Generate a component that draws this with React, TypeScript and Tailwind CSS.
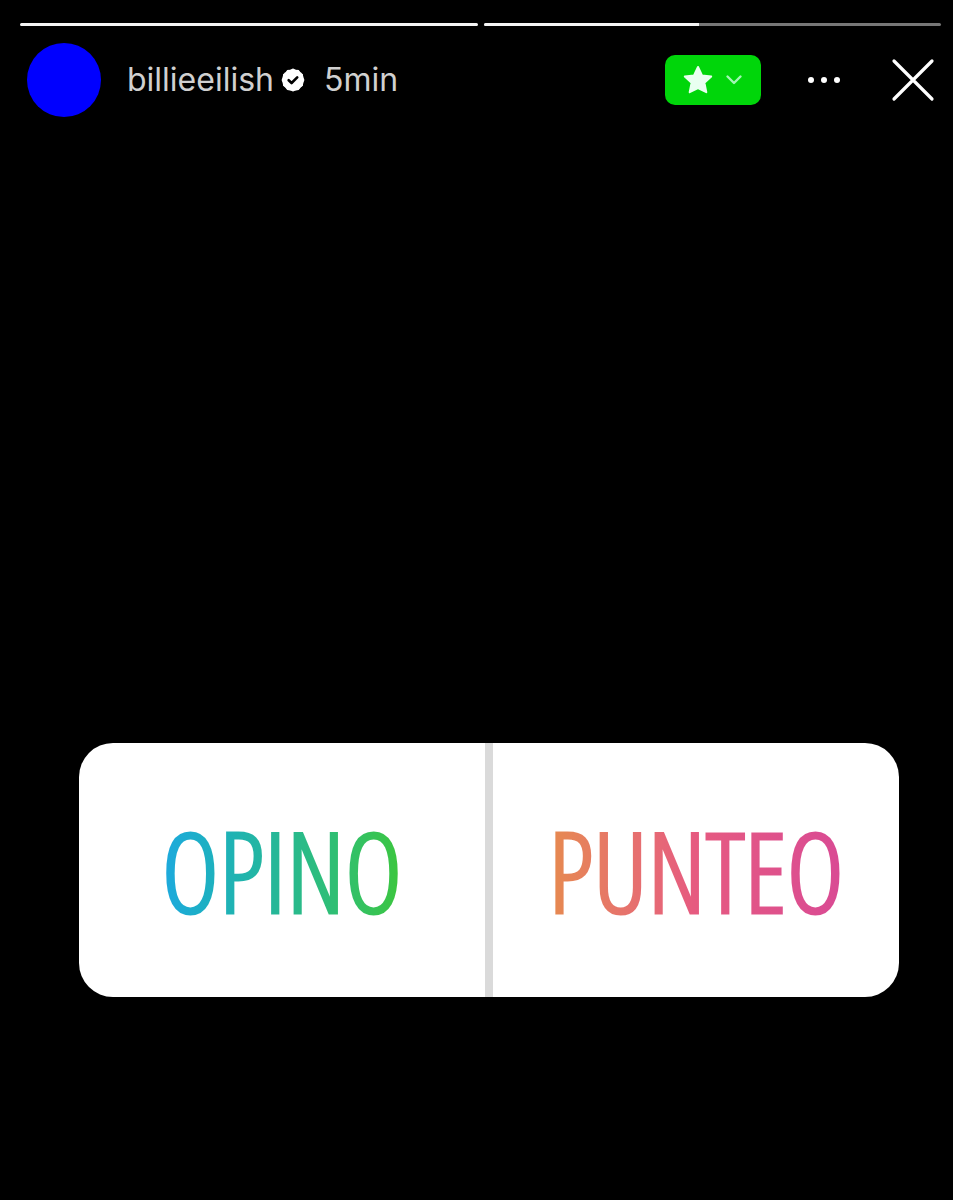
import React, { useState } from "react";

const segments = [
  { id: 1, progress: 100 },
  { id: 2, progress: 47 },
];

const options = [
  { label: "OPINO", color: "from-[#1ea9de] via-[#27b893] to-[#3cc63a]" },
  { label: "PUNTEO", color: "from-[#e68a4e] via-[#e65a80] to-[#d94a94]" },
];

function VerifiedBadge() {
  return (
    <svg viewBox="0 0 24 24" className="w-[26px] h-[26px]" role="img" aria-label="Verified">
      <g fill="#fff">
        <circle cx="12" cy="12" r="10" />
        <rect x="4" y="4" width="16" height="16" rx="2" transform="rotate(15 12 12)" />
        <rect x="4" y="4" width="16" height="16" rx="2" transform="rotate(45 12 12)" />
        <rect x="4" y="4" width="16" height="16" rx="2" transform="rotate(75 12 12)" />
      </g>
      <path
        d="M8 12.2l2.7 2.6 5.2-5.2"
        fill="none"
        stroke="#000"
        strokeWidth="2.4"
        strokeLinecap="round"
        strokeLinejoin="round"
      />
    </svg>
  );
}

export default function App() {
  const [selected, setSelected] = useState<string>();

  return (
    <main className="min-h-screen bg-black flex flex-col font-['Inter',sans-serif]">
      <header className="pt-[23px]">
        <div className="flex gap-1.5 pl-5 pr-3">
          {segments.map((s) => (
            <div key={s.id} className="flex-1 h-[3px] rounded-full bg-[#767676] overflow-hidden">
              <div className="h-full bg-[#f4f4f4]" style={{ width: `${s.progress}%` }} />
            </div>
          ))}
        </div>

        <div className="flex items-center justify-between mt-[17px] pl-[27px] pr-[18px]">
          <div className="flex items-center">
            <div className="w-[74px] h-[74px] rounded-full bg-[#0000ff]" />
            <a href="#profile" className="ml-[26px] flex items-center gap-1.5 text-[32px] leading-10 text-[#d0d0d0]">
              billieeilish
              <VerifiedBadge />
            </a>
            <span className="ml-[18px] text-[32px] leading-10 text-[#d0d0d0]">5min</span>
          </div>

          <div className="flex items-center">
            <button
              aria-label="Close friends"
              className="w-24 h-[50px] rounded-[10px] bg-[#00d60a] flex items-center justify-center gap-3"
            >
              <svg viewBox="0 0 30 30" className="w-[30px] h-[30px]">
                <path
                  d="M15 2l4 8.4 9.2 1.1-6.8 6.3 1.9 9.4L15 23l-8.3 4.2 1.9-9.4-6.8-6.3 9.2-1.1z"
                  fill="#e9fff0"
                  stroke="#e9fff0"
                  strokeWidth="2"
                  strokeLinejoin="round"
                />
              </svg>
              <svg viewBox="0 0 18 12" className="w-[18px] h-3">
                <path
                  d="M2.5 2.5L9 9l6.5-6.5"
                  fill="none"
                  stroke="#a2f7b4"
                  strokeWidth="2.4"
                  strokeLinecap="round"
                  strokeLinejoin="round"
                />
              </svg>
            </button>
            <button aria-label="More" className="ml-[46px]">
              <svg viewBox="0 0 34 8" className="w-[34px] h-2" fill="#fff">
                <circle cx="4" cy="4" r="3" />
                <circle cx="17" cy="4" r="3" />
                <circle cx="30" cy="4" r="3" />
              </svg>
            </button>
            <button aria-label="Close" className="ml-[50px]">
              <svg viewBox="0 0 44 44" className="w-11 h-11">
                <path d="M3 3l38 38M41 3l-38 38" stroke="#fff" strokeWidth="3.2" strokeLinecap="round" />
              </svg>
            </button>
          </div>
        </div>
      </header>

      <section className="mt-auto pt-10 pb-[203px] pl-[79px] pr-[54px]">
        <div className="flex h-[254px] rounded-[34px] bg-white overflow-hidden divide-x-8 divide-[#dadada]">
          {options.map((o) => (
            <button
              key={o.label}
              aria-pressed={selected === o.label}
              onClick={() => setSelected(o.label)}
              className="flex-1 flex items-center justify-center"
            >
              <span
                className={`bg-gradient-to-r bg-clip-text text-transparent text-[110px] leading-none [-webkit-text-stroke:3px_transparent] font-['Open_Sans_Condensed_Light','Roboto_Condensed',sans-serif] ${o.color}`}
              >
                {o.label}
              </span>
            </button>
          ))}
        </div>
      </section>
    </main>
  );
}
